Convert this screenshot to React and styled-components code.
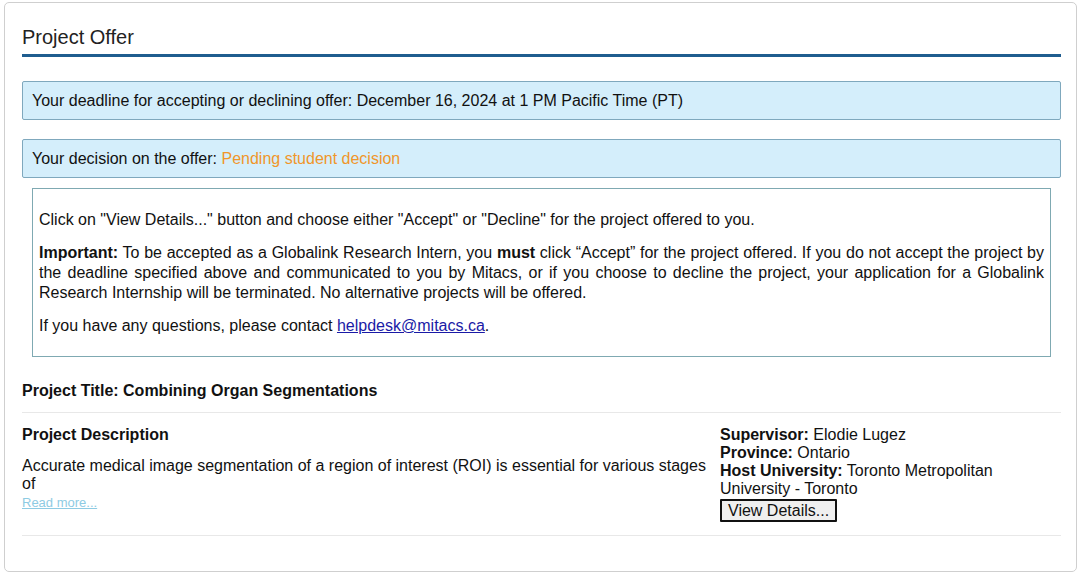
import React from 'react';
import styled, { createGlobalStyle } from 'styled-components';

const GlobalStyle = createGlobalStyle`
  html, body {
    margin: 0;
    padding: 0;
    background: #ffffff;
  }
  body {
    font-family: "Liberation Sans", Arial, sans-serif;
    color: #111;
  }
`;

const Card = styled.div`
  margin: 2px 3px 0 4px;
  height: 570px;
  box-sizing: border-box;
  border: 1px solid #cfcfcf;
  border-radius: 5px;
  padding: 0 15px 0 17px;
  background: #fff;
`;

const Heading = styled.h2`
  margin: 0;
  padding: 23px 0 6px 0;
  font-size: 20px;
  font-weight: normal;
  line-height: 22px;
  color: #222;
  border-bottom: 3px solid #1f5d8f;
`;

const Alert = styled.div`
  margin-top: ${p => p.top}px;
  height: 39px;
  box-sizing: border-box;
  display: flex;
  align-items: center;
  padding: 0 9px;
  background: #d4eefb;
  border: 1px solid #7fa8bd;
  border-radius: 2px;
  font-size: 16px;
  color: #111;
`;

const Pending = styled.span`
  color: #f0962a;
`;

const Notice = styled.div`
  margin: 10px 10px 0 10px;
  height: 169px;
  box-sizing: border-box;
  border: 1px solid #7fa9b2;
  padding: 21px 6px 0 6px;
  font-size: 16px;
  line-height: 20px;
  text-align: justify;
`;

const Para = styled.p`
  margin: 0 0 13px 0;
`;

const Link = styled.a`
  color: #1a1aa6;
  text-decoration: underline;
`;

const ProjectTitle = styled.div`
  margin-top: 24px;
  padding-bottom: 12px;
  font-size: 16px;
  font-weight: bold;
  line-height: 19px;
  border-bottom: 1px solid #e8e8e8;
`;

const Row = styled.div`
  display: flex;
  padding-top: 13px;
  padding-bottom: 13px;
  border-bottom: 1px solid #e8e8e8;
`;

const Left = styled.div`
  width: 698px;
  font-size: 16px;
  line-height: 18px;
`;

const Right = styled.div`
  flex: 1;
  font-size: 16px;
  line-height: 18px;
`;

const SubHead = styled.div`
  font-weight: bold;
  margin-bottom: 13px;
`;

const ReadMore = styled.a`
  display: block;
  margin-top: 1px;
  font-size: 13px;
  color: #8ecbe3;
  text-decoration: underline;
`;

const Button = styled.button`
  margin-top: 1px;
  font-family: "Liberation Sans", Arial, sans-serif;
  font-size: 16px;
  padding: 1px 6px;
  height: 23px;
  background: #efefef;
  border: 2px solid #111;
  border-radius: 1px;
  color: #111;
`;

export default function App() {
  return (
    <>
      <GlobalStyle />
      <Card>
        <Heading>Project Offer</Heading>
        <Alert top={24}>
          Your deadline for accepting or declining offer: December 16, 2024 at 1 PM Pacific Time (PT)
        </Alert>
        <Alert top={19}>
          Your decision on the offer:&nbsp;<Pending>Pending student decision</Pending>
        </Alert>
        <Notice>
          <Para>Click on "View Details..." button and choose either "Accept" or "Decline" for the project offered to you.</Para>
          <Para>
            <b>Important:</b> To be accepted as a Globalink Research Intern, you <b>must</b> click “Accept” for the project offered. If you do not accept the project by the deadline specified above and communicated to you by Mitacs, or if you choose to decline the project, your application for a Globalink Research Internship will be terminated. No alternative projects will be offered.
          </Para>
          <Para>
            If you have any questions, please contact <Link href="#">helpdesk@mitacs.ca</Link>.
          </Para>
        </Notice>
        <ProjectTitle>Project Title: Combining Organ Segmentations</ProjectTitle>
        <Row>
          <Left>
            <SubHead>Project Description</SubHead>
            <div>Accurate medical image segmentation of a region of interest (ROI) is essential for various stages of</div>
            <ReadMore href="#">Read more...</ReadMore>
          </Left>
          <Right>
            <div><b>Supervisor:</b> Elodie Lugez</div>
            <div><b>Province:</b> Ontario</div>
            <div><b>Host University:</b> Toronto Metropolitan University - Toronto</div>
            <Button>View Details...</Button>
          </Right>
        </Row>
      </Card>
    </>
  );
}
